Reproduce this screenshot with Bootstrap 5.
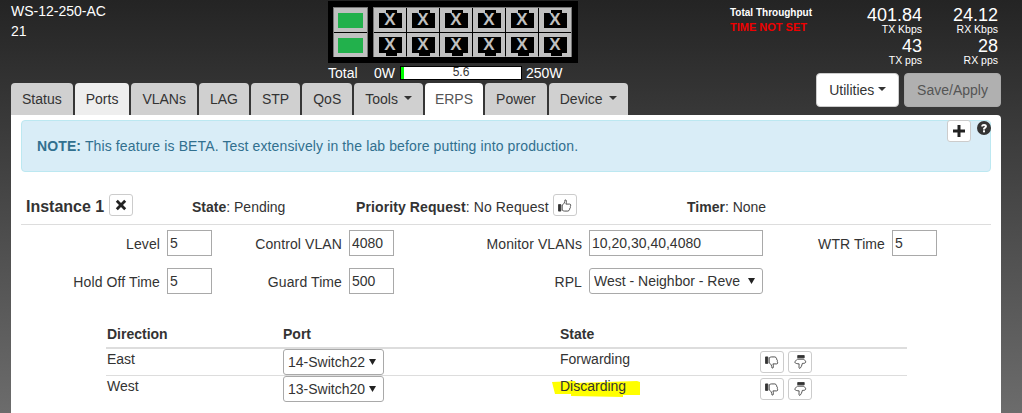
<!DOCTYPE html>
<html lang="en">
<head>
    <meta charset="UTF-8">
    <title>ERPS</title>
    <link href="https://cdn.jsdelivr.net/npm/bootstrap@5.3.0/dist/css/bootstrap.min.css" rel="stylesheet">
    <style>
        html, body { height: 413px; overflow: hidden; }
        body {
            background: linear-gradient(#242424, #6c6c6c);
            font-family: "Liberation Sans", Arial, sans-serif;
            font-size: 14px;
            line-height: 20px;
            color: #333;
        }
        .top-wrap { padding-left: 11px; padding-right: 21px; height: 115px; }
        .left-side { width: 719px; }
        .title-block { width: 317px; color: #fff; padding-top: 1px; }
        .title-block div { height: 20px; }
        .sw-panel { width: 250px; height: 62px; margin-top: 1px; background: #000; padding: 6px 5px; gap: 5px; }
        .sw-group { border: 1px solid #777; display: grid; gap: 1px; background: #000; }
        .sw-group.uplinks { grid-template-columns: 33px; grid-template-rows: 24px 24px; }
        .sw-group.ports { grid-template-columns: repeat(6, 32px); grid-template-rows: 24px 24px; }
        .sw-up { background: #c0c0c0; padding: 5px 4px; height: 24px; }
        .sw-up i { display: block; height: 15px; background: #22b14c; }
        .sw-port { background: #c0c0c0; position: relative; overflow: hidden; }
        .sw-port::before { content: ""; position: absolute; left: 5px; right: 4px; top: 5px; bottom: 4px; background: #000; }
        .sw-port::after { content: ""; position: absolute; left: 12px; width: 11px; top: 2px; height: 6px; background: #000; }
        .sw-port.lower::before { top: 4px; bottom: 4px; }
        .sw-port.lower::after { top: auto; bottom: 1px; }
        .sw-port b { position: absolute; z-index: 1; left: 0; right: 0; top: 2px; text-align: center; color: #c0c0c0; font-size: 17px; line-height: 20px; }
        .power-row { color: #fff; height: 17px; margin-top: 3px; line-height: 15px; }
        .power-row .total-lbl { width: 46px; }
        .power-row .zero-lbl { width: 26px; }
        .power-bar { width: 122px; height: 14px; background: #fff; border: 1px solid #000; margin: 0 4px 0 0; position: relative; color: #333; font-size: 12px; line-height: 10px; text-align: center; }
        .power-bar i { position: absolute; left: 0; top: 0; bottom: 0; width: 3px; background: #0f0; }
        .tab-row { gap: 2px; height: 32px; }
        .tab-row .nav-link { background: #d0d0d0; color: #333; height: 32px; padding: 6px 11px; border-radius: 4px 4px 0 0; }
        .tab-row .nav-link.visited-tab { background: #eee; }
        .tab-row .nav-link.active { background: #fff; color: #555; padding: 6px 10px; }
        .tab-row .dropdown-toggle::after { margin-left: 6px; }
        .right-side { width: 271px; }
        .through-lbl { width: 106px; color: #fff; font-size: 10px; font-weight: bold; line-height: 15px; padding-top: 5px; }
        .through-lbl .no-time { color: #e00; font-size: 11px; }
        .stat-grid { display: grid; grid-template-columns: 86px 76px; justify-items: end; color: #fff; width: 162px; padding-right: 3px; box-sizing: content-box; }
        .stat-grid div { text-align: right; height: 31px; padding-top: 7px; }
        .stat-grid strong { display: block; font-weight: normal; font-size: 18px; line-height: 16px; }
        .stat-grid span { display: block; font-size: 10.5px; line-height: 10px; margin-top: 1px; }
        .action-row { gap: 5px; margin-top: 11px; }
        .action-row .btn { height: 34px; font-size: 14px; padding: 6px 12px; border-radius: 4px; line-height: 20px; }
        .btn-utils { background: #fff; border: 1px solid #ccc; color: #333; width: 83px; }
        .btn-save { background: #b0b0b0; border: 1px solid #aaa; color: #555; width: 97px; }
        .main-panel { margin: 0 21px 0 11px; background: #fff; height: 298px; padding: 5px 10px 0; border-radius: 0 4px 0 0; position: relative; }
        .note-box { height: 52px; background: #d9edf7; border: 1px solid #bce8f1; color: #31708f; border-radius: 4px; padding: 15px; letter-spacing: .12px; }
        .corner-add { position: absolute; top: 5px; left: 936px; }
        .corner-help { position: absolute; top: 6px; left: 966px; width: 14px; height: 14px; }
        .glyph-btn { background: #fff; border: 1px solid #ccc; border-radius: 3px; width: 24px; height: 22px; padding: 0; display: inline-flex; align-items: center; justify-content: center; }
        .instance-head { height: 53px; padding-top: 25px; border-bottom: 1px solid #ddd; }
        .inst-name { width: 88px; padding-left: 5px; font-size: 16px; font-weight: bold; }
        .head-btn { margin-top: -3px; }
        .inst-state { margin-left: 59px; width: 164px; }
        .inst-prio { width: 331px; letter-spacing: .1px; }
        .param-grid { display: grid; grid-template-columns: 139px 45px 123px 45px 181px 174px 115px 45px; column-gap: 7px; row-gap: 12px; margin-top: 5px; align-items: center; }
        .param-grid label { text-align: right; letter-spacing: .1px; padding-top: 1px; }
        .param-grid input, .param-grid select, .ring-table select { border: 1px solid #a9a9a9; background-color: #fff; color: #333; height: 26px; font-size: 14px; padding: 1px 2px; width: 100%; font-family: inherit; outline: 0; }
        .param-grid select, .ring-table select {
            appearance: none;
            border-radius: 3px;
            padding: 1px 22px 1px 4px;
            background-image: url("data:image/svg+xml,%3Csvg xmlns='http://www.w3.org/2000/svg' width='7' height='6'%3E%3Cpath d='M0 0h7L3.500 6z' fill='%23222'/%3E%3C/svg%3E");
            background-repeat: no-repeat;
            background-position: right 7px center;
        }
        .ring-table { width: 801px; margin: 26px 0 0 85px; border-collapse: separate; border-spacing: 0; --bs-table-bg: transparent; }
        .ring-table th { padding: 4px 1px 0; height: 29px; border-bottom: 2px solid #ddd; vertical-align: top; }
        .ring-table td { padding: 0 1px; height: 27px; border-bottom: 1px solid #ddd; vertical-align: top; color: #333; }
        .ring-table tr:last-child td { border-bottom: 0; }
        .ring-table select { width: 101px; display: block; padding-right: 14px; }
        .ring-table .glyph-btn { margin-top: 2px; margin-right: 4px; }
        .brush { position: absolute; left: -9px; top: 4px; width: 90px; height: 18px; z-index: 0; }
        .brush-text { position: relative; display: inline-block; }
        .brush-text span { position: relative; z-index: 1; }
    </style>
</head>
<body>
    <!-- top bar -->
    <div class="top-wrap d-flex justify-content-between">
        <div class="left-side">
            <div class="d-flex">
                <div class="title-block">
                    <div>WS-12-250-AC</div>
                    <div>21</div>
                </div>
                <div>
                    <div class="sw-panel d-flex">
                        <div class="sw-group uplinks">
                            <div class="sw-up"><i></i></div>
                            <div class="sw-up"><i></i></div>
                        </div>
                        <div class="sw-group ports" id="portGrid"></div>
                    </div>
                    <div class="power-row d-flex">
                        <span class="total-lbl">Total</span>
                        <span class="zero-lbl">0W</span>
                        <div class="power-bar"><i></i>5.6</div>
                        <span>250W</span>
                    </div>
                </div>
            </div>
            <ul class="nav tab-row">
                <li class="nav-item"><a class="nav-link" href="#">Status</a></li>
                <li class="nav-item"><a class="nav-link visited-tab" href="#">Ports</a></li>
                <li class="nav-item"><a class="nav-link" href="#">VLANs</a></li>
                <li class="nav-item"><a class="nav-link" href="#">LAG</a></li>
                <li class="nav-item"><a class="nav-link" href="#">STP</a></li>
                <li class="nav-item"><a class="nav-link" href="#">QoS</a></li>
                <li class="nav-item"><a class="nav-link dropdown-toggle" href="#">Tools</a></li>
                <li class="nav-item"><a class="nav-link active" href="#">ERPS</a></li>
                <li class="nav-item"><a class="nav-link" href="#">Power</a></li>
                <li class="nav-item"><a class="nav-link dropdown-toggle" href="#">Device</a></li>
            </ul>
        </div>
        <div class="right-side">
            <div class="d-flex justify-content-between">
                <div class="through-lbl">
                    <div>Total Throughput</div>
                    <div class="no-time">TIME NOT SET</div>
                </div>
                <div class="stat-grid">
                    <div><strong>401.84</strong><span>TX Kbps</span></div>
                    <div><strong>24.12</strong><span>RX Kbps</span></div>
                    <div><strong>43</strong><span>TX pps</span></div>
                    <div><strong>28</strong><span>RX pps</span></div>
                </div>
            </div>
            <div class="action-row d-flex justify-content-end">
                <button class="btn btn-utils dropdown-toggle" type="button">Utilities</button>
                <button class="btn btn-save" type="button">Save/Apply</button>
            </div>
        </div>
    </div>

    <!-- main panel -->
    <div class="main-panel">
        <div class="note-box"><strong>NOTE:</strong> This feature is BETA. Test extensively in the lab before putting into production.</div>
        <button class="glyph-btn corner-add" type="button">
            <svg width="12" height="12" viewBox="0 0 12 12"><path d="M4.500 0h3v4.500H12v3H7.500V12h-3V7.500H0v-3h4.500z" fill="#222"/></svg>
        </button>
        <svg class="corner-help" viewBox="0 0 14 14"><circle cx="7" cy="7" r="7" fill="#333"/><path d="M4.200 5.400C4.300 3.700 5.500 3 7 3c1.700 0 2.900.9 2.900 2.300 0 1.100-.6 1.600-1.300 2.100-.5.300-.7.500-.7 1H6c0-1.100.4-1.600 1.100-2.100.4-.3.700-.5.700-.9 0-.4-.3-.6-.8-.6-.6 0-.9.300-.9.800z" fill="#fff"/><rect x="6" y="9.300" width="2" height="2" fill="#fff"/></svg>

        <div class="instance-head d-flex align-items-start">
            <div class="inst-name"><span>Instance&nbsp;1</span></div>
            <button class="glyph-btn head-btn" type="button">
                <svg width="12" height="12" viewBox="0 0 12 12"><path d="M2.800 .8L6 4 9.200 .8l2 2L8 6l3.200 3.200-2 2L6 8l-3.200 3.200-2-2L4 6 .8 2.800z" fill="#222"/></svg>
            </button>
            <div class="inst-state"><strong>State</strong>: Pending</div>
            <div class="inst-prio d-flex">
                <span><strong>Priority Request</strong>: No Request</span>
                <button class="glyph-btn head-btn ms-1" type="button">
                    <svg width="14" height="13" viewBox="0 0 15 14" fill="none" stroke="#333" stroke-width=".9"><path d="M0.500 6h2.500v7H0.500z" fill="#333"/><path d="M4.500 6.500C6 6 7.500 3.500 7.500 1c1.500-.5 2 1.500 1 4.500h4c1.500 0 1.500 2 .5 2.300.7.700.4 1.700-.3 2 .3.800 0 1.600-.7 1.800 0 1-.7 1.400-1.500 1.400H7c-1 0-2-.5-2.500-1z"/></svg>
                </button>
            </div>
            <div><strong>Timer</strong>: None</div>
        </div>

        <div class="param-grid">
            <label>Level</label><input type="text" value="5">
            <label>Control VLAN</label><input type="text" value="4080">
            <label>Monitor VLANs</label><input type="text" value="10,20,30,40,4080">
            <label>WTR Time</label><input type="text" value="5">
            <label>Hold Off Time</label><input type="text" value="5">
            <label>Guard Time</label><input type="text" value="500">
            <label>RPL</label><select><option>West - Neighbor - Reverse</option></select>
            <span></span><span></span>
        </div>

        <table class="ring-table">
            <thead>
                <tr><th style="width:176px">Direction</th><th style="width:277px">Port</th><th style="width:200px">State</th><th></th></tr>
            </thead>
            <tbody>
                <tr>
                    <td>East</td>
                    <td><select><option>14-Switch22</option></select></td>
                    <td>Forwarding</td>
                    <td class="d-flex"><button class="glyph-btn" type="button"><svg width="14" height="13" viewBox="0 0 15 14" fill="none" stroke="#333" stroke-width=".9"><path d="M0.500 1h2.500v7H0.500z" fill="#333"/><path d="M4.500 7.500C6 8 7.500 10.500 7.500 13c1.500.5 2-1.500 1-4.500h4c1.500 0 1.500-2 .5-2.300.7-.7.4-1.700-.3-2 .3-.8 0-1.600-.7-1.800 0-1-.7-1.400-1.500-1.400H7c-1 0-2 .5-2.500 1z"/></svg></button><button class="glyph-btn" type="button"><svg width="13" height="14" viewBox="0 0 14 15" fill="none" stroke="#333" stroke-width=".9"><path d="M4 0.500h7v2.500H4z" fill="#333"/><path d="M3.500 4.500L10.500 4.500C12 6 13 7 12.500 8c-.5 1-2.500 1-3.500 1-.5 2-1.500 5-3 5.500-1 0-.5-3-.5-5C4 9.500 1 9 1 8c0-1.500 1.500-2.500 2.500-3.500z"/></svg></button></td>
                </tr>
                <tr>
                    <td>West</td>
                    <td><select><option>13-Switch20</option></select></td>
                    <td><span class="brush-text"><svg class="brush" viewBox="0 0 90 18"><path d="M1 2L24 1L25 3L86 1L89 2L89 15L72 15L72 17L20 16L20 14L4 14Z" fill="#ff0"/></svg><span>Discarding</span></span></td>
                    <td class="d-flex"><button class="glyph-btn" type="button"><svg width="14" height="13" viewBox="0 0 15 14" fill="none" stroke="#333" stroke-width=".9"><path d="M0.500 1h2.500v7H0.500z" fill="#333"/><path d="M4.500 7.500C6 8 7.500 10.500 7.500 13c1.500.5 2-1.500 1-4.500h4c1.500 0 1.500-2 .5-2.300.7-.7.4-1.700-.3-2 .3-.8 0-1.600-.7-1.800 0-1-.7-1.400-1.500-1.400H7c-1 0-2 .5-2.500 1z"/></svg></button><button class="glyph-btn" type="button"><svg width="13" height="14" viewBox="0 0 14 15" fill="none" stroke="#333" stroke-width=".9"><path d="M4 0.500h7v2.500H4z" fill="#333"/><path d="M3.500 4.500L10.500 4.500C12 6 13 7 12.500 8c-.5 1-2.500 1-3.500 1-.5 2-1.500 5-3 5.500-1 0-.5-3-.5-5C4 9.500 1 9 1 8c0-1.500 1.500-2.500 2.500-3.500z"/></svg></button></td>
                </tr>
            </tbody>
        </table>
    </div>

    <script src="https://cdn.jsdelivr.net/npm/bootstrap@5.3.0/dist/js/bootstrap.bundle.min.js"></script>
    <script>
        // switch ports, 6 columns by 2 rows
        const portGrid = document.getElementById("portGrid");
        for (let i = 0; i < 12; i++) {
            portGrid.innerHTML += `<div class="sw-port ${i >= 6 ? "lower" : ""}"><b>X</b></div>`;
        }
    </script>
</body>
</html>
